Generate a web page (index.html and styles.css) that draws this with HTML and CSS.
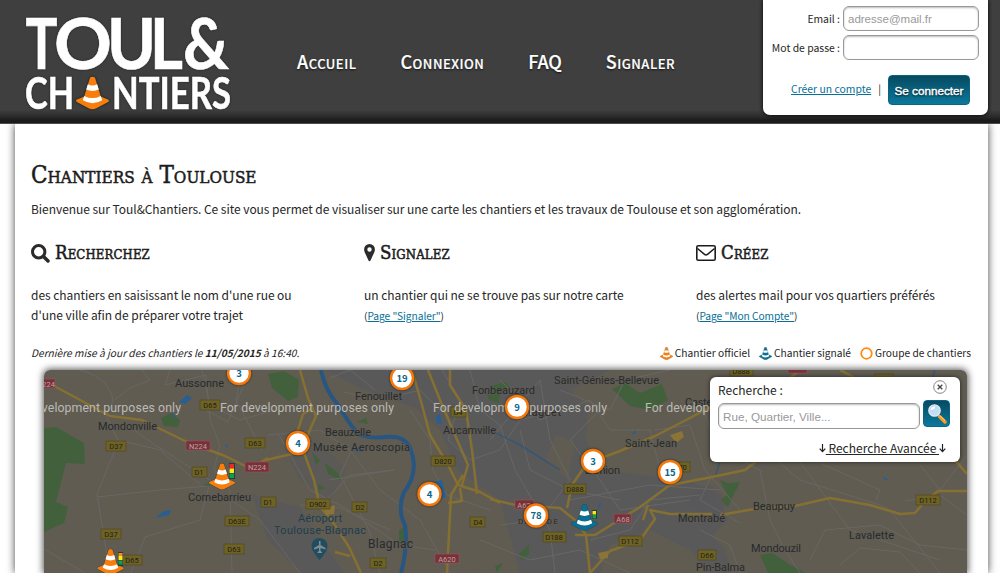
FILE: index.html
```html
<!DOCTYPE html>
<html lang="fr">
<head>
<meta charset="utf-8">
<title>Toul&amp;Chantiers</title>
<link rel="stylesheet" href="styles.css">
</head>
<body>
<svg class="defs" aria-hidden="true">
  <symbol id="cone" viewBox="0 0 35 35">
    <path class="cone-edge" d="M15 1.500Q17.500 0 20 1.500L26 21L34 24.500Q35 25.500 34 26.500L21 33.500Q17.500 35 14 33.500L1 26.500Q0 25.500 1 24.500L9 21Z"/>
    <path class="cone-body" d="M15 1.500Q17.500 0 20 1.500L26 21L34 24.500Q35 25.500 34 26.500L21 33.500Q17.500 35 14 33.500L1 26.500Q0 25.500 1 24.500L9 21Z"/>
    <path fill="#fff" d="M12.700 8.500Q17.500 11 22.300 8.500L24 14Q17.500 17 11 14ZM9 20.500Q17.500 25 26 20.500L27.500 25Q17.500 31 7.500 25Z"/>
  </symbol>
</svg>
<header class="top">
  <svg class="logo" viewBox="0 0 220 124">
    <g class="logo-big">
      <text x="25.500" y="68.500" textLength="32" lengthAdjust="spacingAndGlyphs">T</text>
      <text x="54" y="68.500" textLength="58" lengthAdjust="spacingAndGlyphs">O</text>
      <text x="107" y="68.500" textLength="49" lengthAdjust="spacingAndGlyphs">U</text>
      <text x="150" y="68.500" textLength="33" lengthAdjust="spacingAndGlyphs">L</text>
      <text x="183" y="68.500" textLength="46" lengthAdjust="spacingAndGlyphs">&amp;</text>
    </g>
    <g class="logo-small">
      <text x="25" y="108.500" textLength="49" lengthAdjust="spacingAndGlyphs">CH</text>
      <text x="112" y="108.500" textLength="119" lengthAdjust="spacingAndGlyphs">NTIERS</text>
    </g>
    <use class="official" href="#cone" x="75" y="76" width="35" height="34"/>
  </svg>
  <nav class="menu"><a>Accueil</a><a>Connexion</a><a class="acronym">FAQ</a><a>Signaler</a></nav>
  <form class="login">
    <label>Email :<input type="text" placeholder="adresse@mail.fr"></label>
    <label>Mot de passe :<input type="password"></label>
    <div class="login-actions"><a class="link">Créer un compte</a><span>|</span><button type="button">Se connecter</button></div>
  </form>
</header>
<main class="page">
  <h1>Chantiers à Toulouse</h1>
  <p class="intro">Bienvenue sur Toul&amp;Chantiers. Ce site vous permet de visualiser sur une carte les chantiers et les travaux de Toulouse et son agglomération.</p>
  <div class="features">
    <section>
      <h2><svg width="19" height="19" viewBox="0 0 19 19"><circle cx="7.700" cy="7.700" r="6.200" fill="none" stroke="#2b2b2b" stroke-width="3"/><path d="M12.500 12.500L17 17" stroke="#2b2b2b" stroke-width="3.500" stroke-linecap="round"/></svg><span>Recherchez</span></h2>
      <p>des chantiers en saisissant le nom d'une rue ou<br>d'une ville afin de préparer votre trajet</p>
    </section>
    <section>
      <h2><svg width="11" height="18" viewBox="0 0 11 18"><path fill="#2b2b2b" fill-rule="evenodd" d="M5.500 0A5.400 5.400 0 0 1 10.900 5.500Q10.900 7 10.200 8.400L6.500 16.500Q5.500 18 4.500 16.500L.8 8.400Q.1 7 .1 5.500A5.400 5.400 0 0 1 5.500 0ZM5.500 3.300a2.200 2.200 0 1 0 0 4.400a2.200 2.200 0 1 0 0-4.400Z"/></svg><span>Signalez</span></h2>
      <p>un chantier qui ne se trouve pas sur notre carte<br><small>(<a class="link">Page "Signaler"</a>)</small></p>
    </section>
    <section>
      <h2><svg width="20" height="16" viewBox="0 0 20 16"><rect x=".8" y=".8" width="18.400" height="14.400" rx="1.500" fill="none" stroke="#1c1c1c" stroke-width="1.600"/><path d="M1.500 3.500L8.500 9.300Q10 10.500 11.500 9.300L18.500 3.500" fill="none" stroke="#1c1c1c" stroke-width="1.500"/></svg><span>Créez</span></h2>
      <p>des alertes mail pour vos quartiers préférés<br><small>(<a class="link">Page "Mon Compte"</a>)</small></p>
    </section>
  </div>
  <div class="status">
    <em>Dernière mise à jour des chantiers le <b>11/05/2015</b> à 16:40.</em>
    <ul class="legend">
      <li><svg class="official" width="13" height="13"><use href="#cone" width="13" height="13"/></svg>Chantier officiel</li>
      <li><svg class="reported" width="13" height="13"><use href="#cone" width="13" height="13"/></svg>Chantier signalé</li>
      <li><svg width="13" height="13"><circle cx="6.500" cy="6.500" r="5.300" fill="#fff" stroke="#ff8a0c" stroke-width="1.700"/></svg>Groupe de chantiers</li>
    </ul>
  </div>
  <div class="map">
    <svg class="map-canvas" viewBox="44 370 923 203">
      <rect x="44" y="370" width="923" height="203" fill="#605c52"/>
      <g fill="#59595a">
        <path d="M324 370L362 389L392 400L414 407L440 430L458 470L500 500L520 573H732L724 548L712 536L728 520L722 508L712 490L690 482L650 476L600 470L586 440L588 408L570 390L610 370Z"/>
        <path d="M251 493L272 501L300 507L320 540L345 573H302L268 540Z"/>
        <path d="M282 445L318 440L346 470L330 500L300 480Z" opacity=".6"/>
        <path d="M680 500L710 484L728 502L716 520Z" opacity=".7"/>
      </g>
      <g fill="#605c52">
        <path d="M405 420L430 438L450 470L476 506L478 573H392L350 520L364 480L403 440Z"/>
        <path d="M556 435L575 442L568 480L545 460ZM610 545L650 530L690 550L710 573H600Z"/>
      </g>
      <g fill="#43603d">
        <path d="M44 428L56 427L84 443L85 464L66 463L56 502L68 507L64 523L44 532Z"/>
        <path d="M268 374L284 371L299 380L298 397L288 401L272 388ZM161 418L171 413L180 420L178 427L164 426Z"/>
        <path d="M612 389L625 383L640 393L662 384L668 400L650 410L630 406ZM490 386L506 382L510 388L497 397Z"/>
        <path d="M312 452L320 461L316 465ZM325 463L343 477L340 480L328 474ZM318 484L325 488L319 491ZM357 422L366 418L368 424Z"/>
        <path d="M720 480L728 483L740 482L728 507L721 500L727 495ZM760 555L772 553L789 564L806 573H768ZM519 554L529 544L529 554L522 560ZM495 566L503 563L497 573Z"/>
        <path d="M399 530L406 526L403 545L399 544ZM204 485L211 481L209 488ZM487 394L500 392L499 403L489 400Z"/>
      </g>
      <g class="minor">
        <path d="M80 370Q110 378 113 401L106 416L118 440L113 455L97 494L110 573M142 370L150 380L130 388L113 401M170 370L165 385L206 375L210 420L220 445L214 470L230 490L232 573M44 549L85 573M118 440L160 450L202 486M130 427L155 445L210 480L222 486M97 497L160 490L209 486L200 520L145 537L131 573M231 500L260 520L300 573M206 410L228 422L250 370"/>
        <path d="M202 370L210 405L240 420L275 410M242 370L236 400L262 450M268 435L320 430L350 450L380 490L420 520L450 573M279 435L310 490L345 508L400 545L435 550M329 480L394 470L350 475L325 502M344 392L380 400L420 390L440 410M355 443L340 475L369 530L380 573M300 505L340 508L390 530M330 378L350 370L375 390"/>
        <path d="M410 410L430 440L433 470L447 495L490 510M442 370L460 400L448 440L470 460L500 450L520 420L560 410M470 370L480 410L500 425L515 470L550 530L555 573M490 440L540 380L550 440L570 480L540 520L500 525M500 380L540 420L590 400L610 430L650 430L660 470M520 430L530 470L570 490L620 500M570 500L650 485L720 490M600 410L570 440L600 480L620 510L690 500M560 390L610 410L625 380L670 370M590 540L630 530L650 500L700 495M480 540L530 560L580 550L630 573M655 430L690 425L705 470L740 510"/>
        <path d="M700 400L718 450L776 460L800 480L880 505L890 510L940 573M740 460L760 470L770 520L785 550L800 573M800 462L850 530L880 540L940 560M820 463L880 490L876 500M810 560L825 530L880 525L920 545L967 550M840 565L860 548L900 552L920 573M905 501L940 495L967 515M920 465L940 490L967 455M700 530L730 545L740 573M740 523L700 500L712 475"/>
      </g>
      <g class="water">
        <path d="M321 370Q325 390 338 405Q348 422 358 434Q370 439 385 437Q405 435 410 448Q420 472 404 492Q397 510 405 525Q408 547 401 573" stroke-width="4"/>
        <path d="M490 430L520 445L560 470M935 370L930 384M720 461L715 478" stroke-width="1.500" opacity=".7"/>
      </g>
      <path class="lake" d="M179 402L187 395L192 398L185 404ZM155 518L164 511L171 510L169 515ZM432 482L442 480L446 497L439 500L430 493ZM436 417L440 414L442 424L437 423ZM632 433L636 430L635 435ZM882 476L889 480L885 480ZM598 510L599 504L602 503ZM172 413L175 415L174 419ZM225 445L228 444L227 448ZM354 451L358 447L362 452Z"/>
      <g class="road">
        <path d="M54 386L110 416L142 420L185 441L225 456L251 469L268 458M262 461L300 452M300 370L308 398L316 416L309 432L303 450L314 480L320 507L330 518L349 547L361 573M296 450L298 430L303 414L311 409M335 552L350 556"/>
        <path d="M412 370L422 405L430 435L448 465L458 485L480 492L500 503M428 370L440 400L455 435L468 465L462 485M450 370L450 385L466 410L472 450L477 494M463 475L451 495L447 573M448 503L462 501L460 488"/>
        <path d="M490 499L515 505L560 508L575 520L586 535L590 573"/>
        <path d="M567 508L572 485L583 469L593 461L620 451L655 436L690 418L712 406M575 535L595 535L640 507L670 485L712 477L745 470L758 460M712 514L670 514L650 510L655 519L640 540L610 551L590 573M648 505L643 520M720 515L760 508L795 506L830 498L870 505L900 514L915 513L925 501L938 491H967M955 460L967 474M840 370L855 378M785 382L800 370"/>
      </g>
      <path fill="#8a7436" d="M670 435L682 431L684 437L676 443ZM598 553L608 551L608 558L600 559ZM324 509L335 505L334 514L326 515Z"/>
      <g class="dsign">
        <rect x="200" y="400" width="20" height="10"/><rect x="106" y="441" width="20" height="10"/><rect x="245" y="438" width="20" height="10"/><rect x="192" y="467" width="15" height="10"/><rect x="225" y="516" width="24" height="10"/><rect x="101" y="529" width="20" height="10"/><rect x="224" y="544" width="20" height="10"/><rect x="122" y="555" width="20" height="10"/><rect x="261" y="497" width="15" height="10"/><rect x="306" y="499" width="24" height="10"/><rect x="352" y="502" width="15" height="10"/><rect x="370" y="558" width="16" height="10"/><rect x="431" y="456" width="24" height="10"/><rect x="470" y="517" width="15" height="10"/><rect x="451" y="407" width="15" height="10"/><rect x="564" y="484" width="22" height="10"/><rect x="543" y="532" width="23" height="10"/><rect x="619" y="536" width="23" height="10"/><rect x="698" y="550" width="18" height="10"/><rect x="916" y="495" width="24" height="10"/><rect x="670" y="462" width="20" height="10"/><rect x="730" y="366" width="23" height="10"/><rect x="875" y="374" width="18" height="10"/>
      </g>
      <g class="nsign"><rect x="36" y="379" width="19" height="9"/><rect x="186" y="441" width="24" height="9"/><rect x="245" y="462" width="24" height="10"/><rect x="435" y="554" width="24" height="9"/><rect x="515" y="500" width="19" height="9"/><rect x="614" y="514" width="17" height="9"/><rect x="788" y="364" width="19" height="9"/></g>
      <g class="dtext"><text x="210" y="408">D65</text><text x="116" y="449">D37</text><text x="255" y="446">D63</text><text x="199" y="475">D1</text><text x="237" y="524">D63E</text><text x="111" y="537">D37</text><text x="234" y="552">D63</text><text x="132" y="563">D65</text><text x="268" y="505">D1</text><text x="318" y="507">D902</text><text x="360" y="510">D2</text><text x="378" y="566">D2</text><text x="443" y="464">D820</text><text x="478" y="525">D4</text><text x="458" y="415">D4</text><text x="575" y="492">D888</text><text x="554" y="540">D188</text><text x="630" y="544">D112</text><text x="707" y="558">D66</text><text x="928" y="503">D112</text><text x="680" y="470">D70</text><text x="741" y="374">D888</text></g>
      <g class="ntext"><text x="46" y="387">N224</text><text x="198" y="449">N224</text><text x="257" y="470">N224</text><text x="447" y="562">A620</text><text x="524" y="508">A62</text><text x="623" y="522">A68</text></g>
      <g class="places">
        <text x="175" y="387" textLength="49">Aussonne</text><text x="98" y="430" textLength="59">Mondonville</text><text x="188" y="501" textLength="63">Cornebarrieu</text><text x="355" y="400" textLength="47">Fenouillet</text><text x="325" y="436" textLength="46">Beauzelle</text><text x="313" y="451" textLength="97">Musée Aeroscopia</text><text x="472" y="394" textLength="63">Fonbeauzard</text><text x="443" y="434" textLength="53">Aucamville</text><text x="368" y="548" textLength="45" class="town">Blagnac</text><text x="554" y="384" textLength="105">Saint-Génies-Bellevue</text><text x="525" y="416" textLength="36">naguet</text><text x="625" y="447" textLength="52">Saint-Jean</text><text x="585" y="474" textLength="35">L'Union</text><text x="685" y="406" textLength="66">Castelmaurou</text><text x="678" y="522" textLength="47">Montrabé</text><text x="753" y="510" textLength="42">Beaupuy</text><text x="849" y="539" textLength="45">Lavalette</text><text x="751" y="552" textLength="50">Mondouzil</text><text x="696" y="571" textLength="49">Pin-Balma</text>
        <text x="518" y="524" class="district" textLength="40">DIME-DE</text>
        <g class="airport"><text x="298" y="522" textLength="44">Aéroport</text><text x="274" y="534" textLength="92">Toulouse-Blagnac</text></g>
      </g>
      <path fill="#204e60" d="M319.500 538a8 8 0 0 1 8 8q0 5-8 14q-8-9-8-14a8 8 0 0 1 8-8Z"/>
      <path fill="#7f8c90" d="M319 541h1.500v4l5 3v1.500l-5-1.500v3l1.500 1v1h-4.500v-1l1.500-1v-3l-5 1.500v-1.500l5-3Z"/>
      <g class="watermark"><text x="7" y="412" textLength="174">For development purposes only</text><text x="220" y="412" textLength="174">For development purposes only</text><text x="433" y="412" textLength="174">For development purposes only</text><text x="645" y="412" textLength="174">For development purposes only</text></g>
      <g class="clusters"><circle cx="239" cy="373" r="11"/><circle cx="402" cy="378" r="11"/><circle cx="517" cy="407" r="11"/><circle cx="298" cy="443" r="11"/><circle cx="593" cy="461" r="11"/><circle cx="670" cy="472" r="11"/><circle cx="429.500" cy="494" r="11"/><circle cx="536" cy="515.500" r="11"/></g>
      <g class="counts"><text x="239" y="376.500">3</text><text x="402" y="381.500">19</text><text x="517" y="410.500">9</text><text x="298" y="446.500">4</text><text x="593" y="464.500">3</text><text x="670" y="475.500">15</text><text x="429.500" y="497.500">4</text><text x="536" y="519">78</text></g>
      <use class="official" href="#cone" x="208.500" y="463" width="27" height="27"/>
      <use class="official" href="#cone" x="97" y="548.500" width="27" height="27"/>
      <use class="reported" href="#cone" x="571" y="504" width="27" height="27"/>
      <g><path fill="#263e3c" d="M229 463h6v16h-6ZM118 552h5v14h-5ZM592 510h5v9h-5Z"/><path fill="#f0262c" d="M229.500 464h4.500v4.500h-4.500Z"/><path fill="#ffe715" d="M229.500 468.500h4.500v4.500h-4.500ZM118.500 556h4v4h-4ZM592.500 511h3.500v3.500h-3.500Z"/><path fill="#10a04d" d="M229.500 473.500h4.500v4.500h-4.500ZM118.500 560.500h4v4h-4ZM592.500 515h3.500v3.500h-3.500Z"/><path fill="#f58b1c" d="M118.500 553h4v3h-4Z"/></g>
    </svg>
    <div class="search">
      <div class="search-head"><span>Recherche :</span><svg width="14" height="14" viewBox="0 0 14 14"><circle cx="7" cy="7" r="6.300" fill="#fff" stroke="#777" stroke-width=".9"/><path d="M4.700 4.700L9.300 9.300M9.300 4.700L4.700 9.300" stroke="#444" stroke-width="1.300"/></svg></div>
      <div class="search-row"><input type="text" placeholder="Rue, Quartier, Ville..."><button type="button" aria-label="Rechercher"><svg width="26" height="26" viewBox="0 0 26 26"><path d="M15.500 15.500L21 21" stroke="#f59a23" stroke-width="3.500" stroke-linecap="round"/><path d="M15.500 14.500L21 19.500" stroke="#ffd28a" stroke-width="1"/><circle cx="10.500" cy="9.500" r="5.700" fill="#c3def4" stroke="#dcebf8" stroke-width="1.300"/><path d="M6.500 9Q7 5.500 11 5.500Q12 8 6.500 9Z" fill="#fff"/></svg></button></div>
      <div class="advanced"><svg width="7" height="9" viewBox="0 0 7 9"><path d="M3.500 0V7.500M.7 4.700L3.500 7.700L6.300 4.700" fill="none" stroke="#222" stroke-width="1.200"/></svg><a>&nbsp;Recherche Avancée&nbsp;</a><svg width="7" height="9" viewBox="0 0 7 9"><path d="M3.500 0V7.500M.7 4.700L3.500 7.700L6.300 4.700" fill="none" stroke="#222" stroke-width="1.200"/></svg></div>
    </div>
  </div>
</main>
</body>
</html>
```
FILE: styles.css
```css
* { box-sizing: border-box; }
body { margin: 0; height: 573px; overflow: hidden; background: #fff; color: #262626; font: 12px/20px "Noto Sans CJK SC", "Open Sans", sans-serif; }
h1, h2, p, ul { margin: 0; padding: 0; }
.defs { display: none; }
.official { --cone: #f97d0b; }
.reported { --cone: #0b6f93; }
.cone-body { fill: var(--cone); }
.cone-edge { fill: none; stroke: #16424d; stroke-opacity: .55; stroke-width: 1.5; }
.legend .cone-edge { stroke: none; }
.top { position: relative; z-index: 1; display: flex; height: 124px; background: linear-gradient(#3f3f3f 0, #3f3f3f 110px, #292929 117px, #1c1c1c 120px, #1c1c1c 123px, #777 124px); }
.logo { width: 220px; height: 124px; flex: none; overflow: visible; filter: drop-shadow(0 0 1px #222); }
.logo text { font-family: Lato, sans-serif; font-weight: 700; fill: #fff; stroke: #fff; stroke-width: .6px; }
.logo-big { font-size: 71px; }
.logo-small { font-size: 43px; }
.menu { display: flex; gap: 44px; width: 466px; margin-left: 77px; padding-top: 47px; font-size: 18px; line-height: 28px; font-weight: 500; font-variant: small-caps; letter-spacing: .5px; color: #fff; -webkit-text-stroke: .2px #fff; text-shadow: 0 1px 2px #111; white-space: nowrap; }
.menu .acronym { letter-spacing: -.2px; }
.login { width: 225px; height: 115px; padding: 6px 9px 0 0; background: #fff; border-radius: 0 0 7px 7px; box-shadow: 0 0 4px #000; font-size: 10.4px; }
.login label { display: flex; justify-content: flex-end; align-items: center; gap: 3px; height: 25px; margin-bottom: 4px; }
input { border: 1px solid #999; border-radius: 6px; background: #fff; box-shadow: inset 0 1px 2px #bbb; font: 12px "Liberation Sans", sans-serif; padding: 0 4px; }
input::placeholder { color: #999; opacity: 1; }
.login input { width: 136px; height: 25px; font-size: 11.5px; }
.login-actions { display: flex; justify-content: flex-end; align-items: center; gap: 7px; padding: 11px 9px 0 0; }
.login-actions .link, .login-actions span { margin-bottom: 3px; }
.link { color: #086f97; text-decoration: underline; }
button { border: 1px solid #0a6584; border-radius: 4px; background: linear-gradient(#074a60, #0b789c); color: #fff; padding: 0; }
.login button { width: 82px; height: 30px; font: 500 11.7px "Liberation Sans", sans-serif; -webkit-text-stroke: .4px #fff; text-shadow: 0 1px 2px #000; }
.page { width: 973px; height: 449px; margin-left: 15px; padding: 36px 16px 0; background: #fff; box-shadow: 0 0 8px #444; }
h1, h2 { font-family: "DejaVu Serif Condensed", "DejaVu Serif", serif; font-weight: 400; font-variant: small-caps; color: #1c1c1c; -webkit-text-stroke: .5px #1c1c1c; white-space: nowrap; }
h1 { font-size: 24px; line-height: 30px; letter-spacing: 0; }
.intro { margin-top: 9px; letter-spacing: -.045px; white-space: nowrap; }
.features { display: grid; grid-template-columns: 333px 332px 1fr; margin-top: 19px; white-space: nowrap; }
h2 { display: flex; align-items: center; gap: 5px; height: 30px; font-size: 18.5px; line-height: 30px; letter-spacing: .15px; }
.features p { margin-top: 17px; letter-spacing: -.045px; }
small { font-size: 10.2px; }
.status { display: flex; justify-content: space-between; margin-top: 17px; padding-right: 1px; font-size: 10.2px; white-space: nowrap; }
.legend { display: flex; gap: 9px; list-style: none; }
.legend li { display: flex; align-items: center; gap: 2px; }
.map { position: relative; width: 923px; height: 203px; margin: 7px 0 0 13px; border-radius: 6px 6px 0 0; box-shadow: 0 0 7px 1px #555; }
.map-canvas { display: block; width: 923px; height: 203px; border-radius: 6px 6px 0 0; }
.minor { fill: none; stroke: #686765; stroke-width: 1; }
.water { fill: none; stroke: #285680; }
.lake { fill: #285f91; }
.road { fill: none; stroke: #857032; stroke-width: 2.5; stroke-linejoin: round; }
.dsign { fill: #6e6225; stroke: #504821; stroke-width: .7; }
.nsign { fill: #793137; stroke: #91545a; stroke-width: .7; }
.dtext, .ntext { font: 7.5px Roboto, sans-serif; text-anchor: middle; fill: #211f16; }
.ntext { fill: #b9a3a5; }
.places { font: 11px Roboto, sans-serif; fill: #292a2d; stroke: #5f5c54; stroke-width: 1px; paint-order: stroke; }
.places .town { font-size: 12px; }
.places .district { font-size: 8px; }
.airport { fill: #203c4e; }
.watermark { font: 12.3px Roboto, sans-serif; fill: #bcbab5; }
.clusters { fill: #fff; stroke: #f5780a; stroke-width: 2.5; filter: drop-shadow(0 0 1px #222); }
.counts { font: 700 9.5px "Noto Sans CJK SC", sans-serif; fill: #0a668c; text-anchor: middle; }
.search { position: absolute; top: 7px; right: 7px; width: 250px; height: 85px; padding: 3px 9px 0 8px; background: #fff; border-radius: 6px; box-shadow: 0 0 4px #222; }
.search-head { display: flex; justify-content: space-between; padding-right: 4px; }
.search-row { display: flex; gap: 3px; }
.search-row input { width: 202px; height: 26px; margin-top: 3px; font-size: 11.7px; }
.search-row button { width: 27px; height: 27px; }
.search-row svg { display: block; }
.advanced { display: flex; align-items: center; justify-content: flex-end; margin-top: 9px; padding-right: 5px; }
.advanced a { text-decoration: underline; }
```
